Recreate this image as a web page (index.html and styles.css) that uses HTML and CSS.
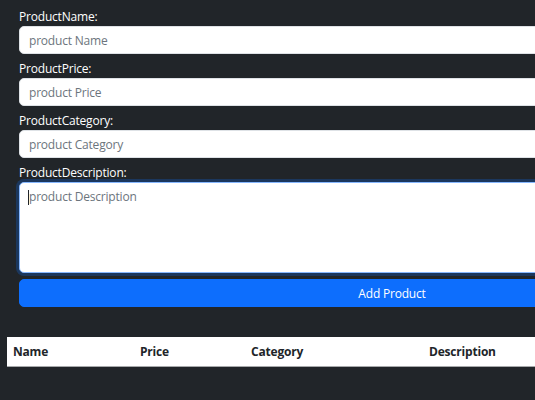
FILE: index.html
```html
<!DOCTYPE html>
<html>
<head>
<meta charset="utf-8">
<link rel="stylesheet" href="styles.css">
</head>
<body>
<div class="page">
  <form class="product-form">
    <div class="field">
      <label class="field-label">ProductName:</label>
      <input class="field-input" type="text" placeholder="product Name">
    </div>
    <div class="field">
      <label class="field-label">ProductPrice:</label>
      <input class="field-input" type="text" placeholder="product Price">
    </div>
    <div class="field">
      <label class="field-label">ProductCategory:</label>
      <input class="field-input" type="text" placeholder="product Category">
    </div>
    <div class="field">
      <label class="field-label">ProductDescription:</label>
      <div class="area-wrap">
        <textarea class="field-area is-focused" placeholder="product Description"></textarea>
        <span class="caret"></span>
      </div>
    </div>
    <button type="button" class="add-btn">Add Product</button>
  </form>
  <table class="product-table">
    <thead>
      <tr>
        <th class="col-name">Name</th>
        <th class="col-price">Price</th>
        <th class="col-cat">Category</th>
        <th class="col-desc">Description</th>
      </tr>
    </thead>
  </table>
</div>
</body>
</html>
```
FILE: styles.css
```css
html, body {
  margin: 0;
  padding: 0;
  background: #212529;
  overflow: hidden;
}
body {
  font-family: "Open Sans", "Noto Sans", sans-serif;
  font-size: 12px;
  color: #fff;
}
.page {
  width: 535px;
  height: 400px;
  overflow: hidden;
  padding-top: 8px;
  box-sizing: border-box;
}
.product-form {
  width: 746px;
  margin-left: 19px;
  display: flex;
  flex-direction: column;
  gap: 6px;
}
.field {
  display: flex;
  flex-direction: column;
}
.field-label {
  display: block;
  line-height: 18px;
  height: 18px;
  color: #fff;
  letter-spacing: -0.2px;
}
.field-input,
.field-area {
  box-sizing: border-box;
  width: 100%;
  border: 1px solid #dee2e6;
  border-radius: 5px;
  background: #fff;
  font-family: inherit;
  font-size: 12px;
  letter-spacing: -0.2px;
  color: #212529;
  padding: 0 9px;
  margin: 0;
  outline: none;
}
.field-input {
  height: 28px;
}
.field-input::placeholder,
.field-area::placeholder {
  color: #6c757d;
  opacity: 1;
}
.area-wrap {
  position: relative;
}
.field-area {
  display: block;
  height: 91px;
  padding: 5px 9px;
  line-height: 18px;
  resize: none;
}
.field-area.is-focused {
  border-color: #86b7fe;
  box-shadow: 0 0 0 3px rgba(13, 110, 253, 0.25);
}
.caret {
  position: absolute;
  left: 9px;
  top: 8px;
  width: 1px;
  height: 15px;
  background: #212529;
}
.add-btn {
  height: 28px;
  width: 100%;
  border: 1px solid #0d6efd;
  border-radius: 5px;
  background: #0d6efd;
  color: #fff;
  font-family: inherit;
  font-size: 12px;
  letter-spacing: -0.2px;
  padding: 0;
  margin: 0;
}
.product-table {
  margin-top: 30px;
  margin-left: 7px;
  width: 800px;
  border-collapse: collapse;
  background: #fff;
  color: #212529;
}
.product-table th {
  text-align: left;
  font-weight: 700;
  font-size: 12px;
  letter-spacing: -0.2px;
  height: 29px;
  padding: 0 6px;
  border-bottom: 1px solid #a7a9ab;
  box-sizing: border-box;
}
.col-name { width: 127px; }
.col-price { width: 111px; }
.col-cat { width: 178px; }
.col-desc { width: auto; }
```
